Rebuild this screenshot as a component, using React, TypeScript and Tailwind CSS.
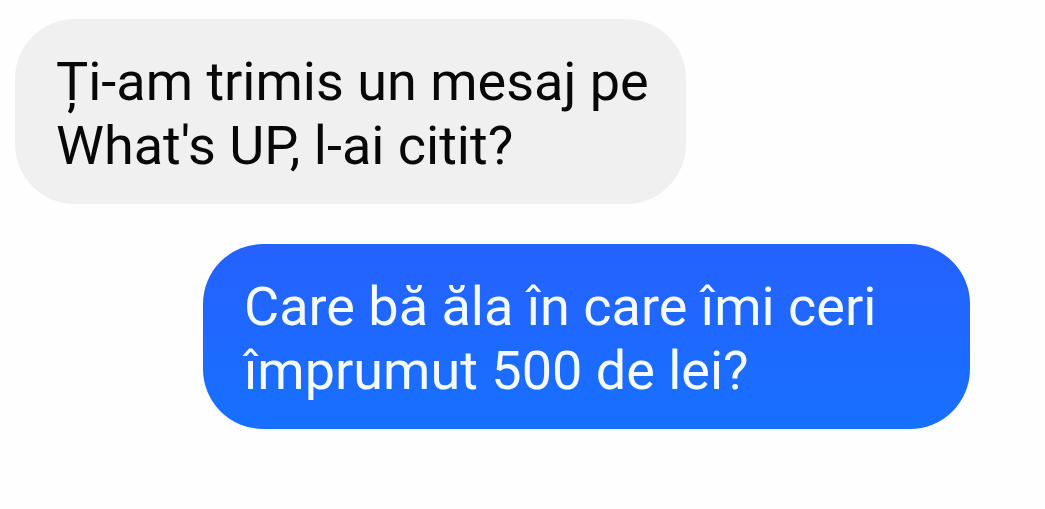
import clsx from "clsx";

type Message = {
  id: number;
  text: string;
  sent: boolean;
};

const messages: Message[] = [
  { id: 1, text: "Ți-am trimis un mesaj pe What's UP, l-ai citit?", sent: false },
  {
    id: 2,
    text: "Care bă ăla în care îmi ceri împrumut 500 de lei?",
    sent: true,
  },
];

const MessageBubble = ({ message }: { message: Message }) => {
  return (
    <li
      className={clsx(
        "rounded-[60px] pt-[31px] pr-8 pb-[26px] pl-[41px]",
        message.sent
          ? "self-end max-w-[767px] bg-linear-to-b from-[#2561ff] to-[#1670ff] text-[#f4fbff]"
          : "self-start max-w-[671px] bg-[#f0f0f0] text-[#080808]"
      )}
    >
      <p>{message.text}</p>
    </li>
  );
};

const App = () => {
  return (
    <main className="min-h-screen bg-[#fefefe] pt-[19px] pr-[75px] pl-[15px] font-['Roboto',sans-serif] text-[54px] leading-[64px]">
      <ul className="flex flex-col gap-10">
        {messages.map((message) => (
          <MessageBubble key={message.id} message={message} />
        ))}
      </ul>
    </main>
  );
};

export default App;
